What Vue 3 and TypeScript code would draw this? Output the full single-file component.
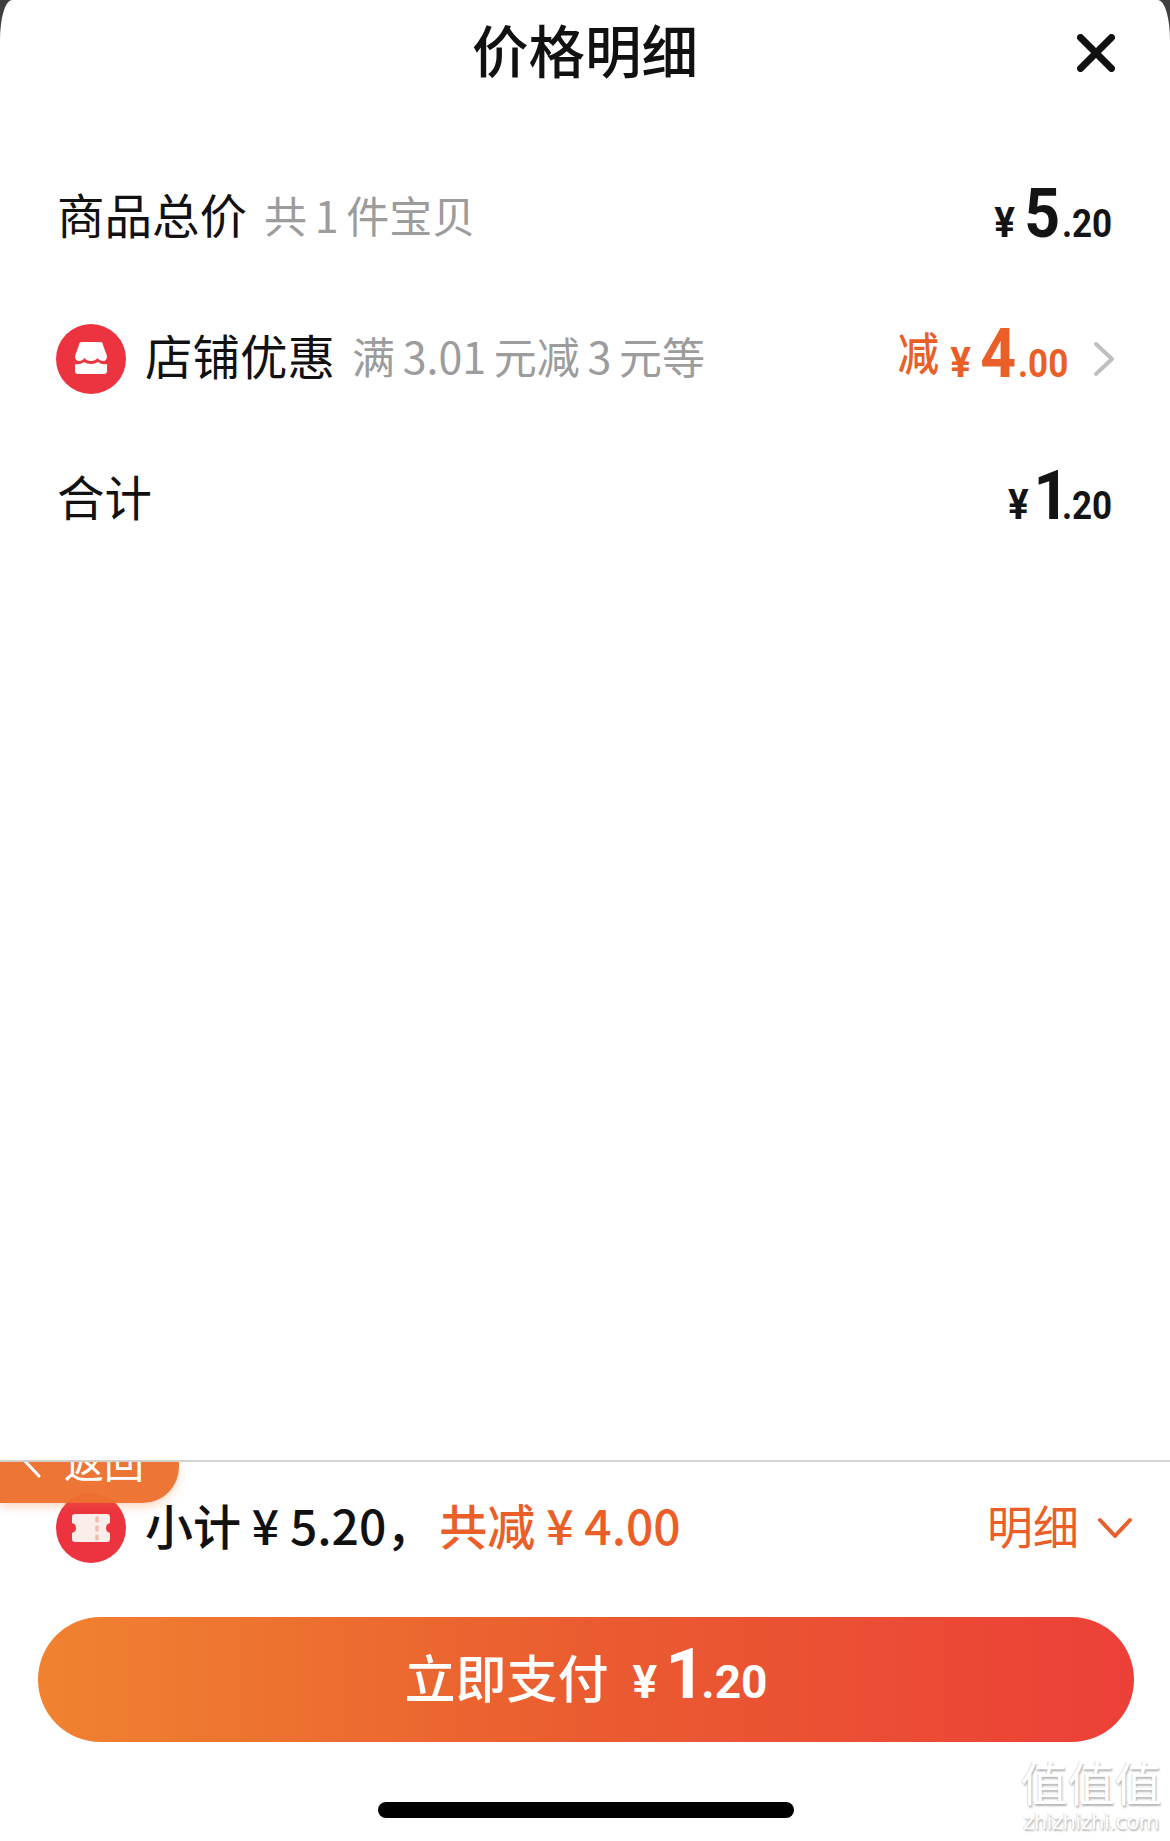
<script setup lang="ts">
interface Price { yen: string; whole: string; frac: string }
const total: Price = { yen: '¥', whole: '5', frac: '.20' }
const off: Price = { yen: '¥', whole: '4', frac: '.00' }
const sum: Price = { yen: '¥', whole: '1', frac: '.20' }
</script>

<template>
  <div class="page">
    <div class="sheet">
      <header class="head">
        <span></span>
        <h1 class="title">价格明细</h1>
        <svg class="close" viewBox="0 0 38 38" width="38" height="38" aria-label="关闭">
          <path d="M3.5 3.5 34.5 34.5M34.5 3.5 3.5 34.5" fill="none" stroke="#111" stroke-width="7" stroke-linecap="round" />
        </svg>
      </header>

      <section class="rows">
        <div class="row">
          <span class="label">商品总价</span>
          <span class="note">共 1 件宝贝</span>
          <span class="price">
            <span class="yen">{{ total.yen }}</span><span class="whole">{{ total.whole }}</span><span class="frac">{{ total.frac }}</span>
          </span>
        </div>
        <div class="row">
          <svg class="badge" viewBox="0 0 70 70" width="70" height="70">
            <circle cx="35" cy="35" r="35" fill="#ec3340" />
            <path d="M23 21q0-3 3-3h18q3 0 3 3l4 11q0 5-4 5-3.500 0-5.500-3-2 3-6.500 3t-6.500-3q-2 3-5.500 3-4 0-4-5z" fill="#fff" />
            <path d="M19 40q5 1 9-2 3 2 7 2t7-2q4 3 9 2v7q0 3-3 3H22q-3 0-3-3z" fill="#fff" />
          </svg>
          <span class="label">店铺优惠</span>
          <span class="note">满 3.01 元减 3 元等</span>
          <span class="price orange">
            <span class="jian">减</span><span class="yen">{{ off.yen }}</span><span class="whole">{{ off.whole }}</span><span class="frac">{{ off.frac }}</span>
          </span>
          <svg class="more" viewBox="0 0 22 36" width="22" height="36">
            <path d="M3 3 19 18 3 33" fill="none" stroke="#bfbfbf" stroke-width="4" stroke-linecap="round" stroke-linejoin="round" />
          </svg>
        </div>
        <div class="row">
          <span class="label">合计</span>
          <span class="price">
            <span class="yen">{{ sum.yen }}</span><span class="whole one">{{ sum.whole }}</span><span class="frac">{{ sum.frac }}</span>
          </span>
        </div>
      </section>

      <footer class="foot">
        <div class="back">
          <svg viewBox="0 0 22 40" width="22" height="40" class="back-icon">
            <path d="M19 3 3 20 19 37" fill="none" stroke="#fff" stroke-width="3" stroke-linecap="round" stroke-linejoin="round" />
          </svg>
          <span class="back-text">返回</span>
        </div>

        <div class="summary">
          <svg class="badge" viewBox="0 0 70 70" width="70" height="70">
            <circle cx="35" cy="35" r="35" fill="#ec3340" />
            <path d="M16 24q0-3 3-3h32q3 0 3 3v6q-4 1-4 5t4 5v6q0 3-3 3H19q-3 0-3-3v-6q4-1 4-5t-4-5z" fill="#fbeeea" />
            <path d="M41 25v3M41 34v3M41 43v3" stroke="#f0bcb6" stroke-width="3.500" stroke-linecap="round" />
          </svg>
          <span class="sub-black">小计 ¥ 5.20，</span>
          <span class="sub-orange">共减 ¥ 4.00</span>
          <span class="detail">明细</span>
          <svg class="down" viewBox="0 0 36 24" width="36" height="24">
            <path d="M3 4 18 20 33 4" fill="none" stroke="#e8602c" stroke-width="4" stroke-linecap="round" stroke-linejoin="round" />
          </svg>
        </div>

        <button class="pay">
          <span class="pay-label">立即支付</span>
          <span class="price white">
            <span class="yen">{{ sum.yen }}</span><span class="whole one">{{ sum.whole }}</span><span class="frac">{{ sum.frac }}</span>
          </span>
        </button>

        <div class="home"></div>
      </footer>
    </div>

    <div class="mark">
      <div class="mark-cn">值值值</div>
      <div class="mark-en">zhizhizhi.com</div>
    </div>
  </div>
</template>

<style>
html, body { margin: 0; padding: 0; background: #fff; }
</style>

<style scoped>
.page {
  position: relative;
  width: 1170px;
  height: 1841px;
  overflow: hidden;
  background: #3f3f3f;
  font-family: "Noto Sans CJK SC", "Noto Sans", sans-serif;
  color: #111;
}
.sheet {
  height: 100%;
  display: flex;
  flex-direction: column;
  background: #fff;
  border-radius: 12px 12px 0 0 / 40px 40px 0 0;
}
.head {
  height: 104px;
  flex: none;
  display: grid;
  grid-template-columns: 1fr auto 1fr;
  align-items: center;
  padding: 0 55px;
}
.title {
  margin: 0;
  font-size: 56.500px;
  line-height: 96px;
  height: 104px;
  font-weight: 500;
}
.close { justify-self: end; margin-top: 2px; }
.rows {
  flex: 1;
  padding: 43px 58px 0 56px;
}
.row {
  height: 141px;
  display: flex;
  align-items: center;
}
.label {
  font-size: 47.500px;
  line-height: 60px;
  padding-bottom: 8px;
  margin-left: 1px;
}
.badge { flex: none; margin-right: 19px; }
.badge + .label { margin-left: 0; }
.note {
  margin-left: 17px;
  padding-bottom: 8px;
  font-size: 43px;
  line-height: 60px;
  color: #9c9c9c;
  word-spacing: -2px;
}
.price {
  margin-left: auto;
  display: inline-flex;
  align-items: baseline;
  padding-bottom: 8px;
  font-family: Roboto, sans-serif;
  font-weight: 700;
  color: #141414;
  transform: scaleX(0.92);
  transform-origin: right center;
}
.yen { font-size: 42px; margin-right: 10px; }
.whole { font-size: 68px; line-height: 70px; }
.whole.one { margin: 0 -10px 0 -5px; }
.frac { font-size: 38px; margin-left: 2px; }
.orange { color: #ea5e28; }
.jian {
  font-family: "Noto Sans CJK SC", sans-serif;
  font-size: 45px;
  font-weight: 500;
  margin-right: 12px;
  transform: translateY(-6px);
}
.more { margin: 0 -3px 0 25px; flex: none; }
.foot {
  position: relative;
  flex: none;
  height: 381px;
  border-top: 2px solid #d4d4d4;
  box-sizing: border-box;
}
.back {
  position: absolute;
  left: 0;
  top: 0;
  width: 179px;
  height: 41px;
  background: rgba(236, 113, 48, 0.97);
  border-radius: 0 0 36px 0;
  box-shadow: 0 4px 10px rgba(238, 116, 48, 0.28);
  overflow: hidden;
  color: #fff;
  display: flex;
  z-index: 2;
}
.back-icon { margin: -23px 0 0 20px; }
.back-text {
  font-size: 40px;
  line-height: 40px;
  height: 40px;
  margin: -21px 0 0 22px;
}
.summary {
  height: 132px;
  display: flex;
  align-items: center;
  padding: 0 38px 0 56px;
}
.sub-black {
  font-size: 48px;
  font-weight: 500;
  white-space: pre;
  padding-bottom: 8px;
  margin-left: 0;
}
.sub-orange {
  margin-left: 5px;
  font-size: 48px;
  font-weight: 500;
  color: #ea5e28;
  padding-bottom: 8px;
}
.detail {
  margin-left: auto;
  font-size: 46px;
  color: #ea5e28;
  margin-right: 18px;
  padding-bottom: 8px;
}
.down { margin-right: -1px; }
.pay {
  display: flex;
  align-items: center;
  justify-content: center;
  width: 1096px;
  height: 125px;
  margin: 23px 0 0 38px;
  border: 0;
  padding: 0;
  border-radius: 63px;
  background: linear-gradient(90deg, #f08230 0%, #ea5c30 50%, #ec4038 100%);
  color: #fff;
  font-family: inherit;
}
.pay-label { font-size: 51px; font-weight: 500; padding-bottom: 8px; }
.white { color: #fff; margin-left: 24px; transform: none; padding-bottom: 12px; }
.white .yen { font-size: 46px; margin-right: 8px; }
.white .whole { font-size: 70px; }
.white .whole.one { margin: 0 -6px 0 0; }
.white .frac { font-size: 46px; }
.home {
  width: 416px;
  height: 16px;
  margin: 60px 0 0 378px;
  border-radius: 8px;
  background: #000;
}
.mark {
  position: absolute;
  right: 8px;
  bottom: 8px;
  width: 142px;
  text-align: center;
  color: #fff;
  text-shadow: 1px 2px 2px #b4b4b4, -1px 0 0 #e0e0e0;
}
.mark-cn { font-size: 47px; line-height: 60px; height: 60px; font-weight: 400; }
.mark-en { font-size: 21px; line-height: 22px; font-family: "DejaVu Sans", sans-serif; white-space: nowrap; letter-spacing: -0.500px; }
</style>
